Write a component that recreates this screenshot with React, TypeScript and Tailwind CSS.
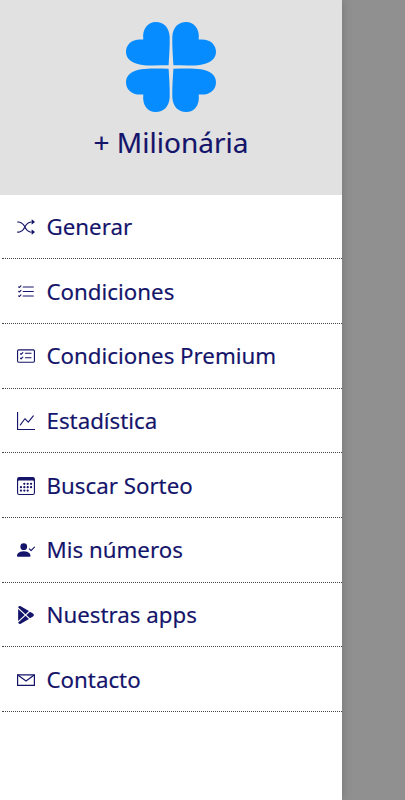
import type { ComponentType } from "react";
import {
  BsCalendar3,
  BsCardChecklist,
  BsGooglePlay,
  BsGraphUp,
  BsListCheck,
  BsPersonCheckFill,
  BsShuffle,
} from "react-icons/bs";

interface MenuItem {
  label: string;
  icon: ComponentType<{ className?: string }>;
}

const Envelope = ({ className }: { className?: string }) => (
  <svg viewBox="0 0 18 18" className={className} fill="none" stroke="currentColor">
    <path strokeWidth="1.2" d="M.6 3.9h16.8v10.5H.6z" />
    <path strokeWidth="1.2" d="M.8 4.1 9 10l8.2-5.9" />
  </svg>
);

const menuItems: MenuItem[] = [
  { label: "Generar", icon: BsShuffle },
  { label: "Condiciones", icon: BsListCheck },
  { label: "Condiciones Premium", icon: BsCardChecklist },
  { label: "Estadística", icon: BsGraphUp },
  { label: "Buscar Sorteo", icon: BsCalendar3 },
  { label: "Mis números", icon: BsPersonCheckFill },
  { label: "Nuestras apps", icon: BsGooglePlay },
  { label: "Contacto", icon: Envelope },
];

const leaf =
  "M42.6 43.3C32 43.4 23 43.9 15 42.7C5.5 41.2 0 36.5 0 29.8C0 22 6.5 16.2 17.3 17.6C16 6.5 22 0 29.8 0C37.6 0 43.2 5.2 43.7 15C43.9 25 43.1 35 42.6 43.3Z";

const CloverLogo = () => (
  <svg viewBox="0 0 90 90" className="size-[90px]" fill="#068cff">
    <path d={leaf} />
    <path d={leaf} transform="matrix(-1 0 0 1 90 0)" />
    <path d={leaf} transform="matrix(1 0 0 -1 0 90)" />
    <path d={leaf} transform="matrix(-1 0 0 -1 90 90)" />
  </svg>
);

const App = () => {
  return (
    <div className="flex h-screen bg-[#909090] font-['Noto_Sans',sans-serif] text-[#14146a]">
      <aside className="w-[342px] bg-white shadow-[0_0_10px_rgba(0,0,0,0.2)]">
        <header className="flex h-[194.5px] flex-col items-center bg-[#e1e1e1] pt-[22px]">
          <CloverLogo />
          <h1 className="mt-[10px] text-[28px] leading-[40px] [-webkit-text-stroke:0.15px]">
            + Milionária
          </h1>
        </header>
        <nav className="pl-[2px]">
          {menuItems.map(({ label, icon: Icon }) => (
            <a
              key={label}
              className="flex h-[64.7px] items-center border-b border-dotted border-[#444] pt-px pl-[15px]"
            >
              <Icon className="size-[18px] shrink-0" />
              <span className="ml-[11.5px] text-[22.3px] leading-[30px] [-webkit-text-stroke:0.15px]">
                {label}
              </span>
            </a>
          ))}
        </nav>
      </aside>
    </div>
  );
};

export default App;
